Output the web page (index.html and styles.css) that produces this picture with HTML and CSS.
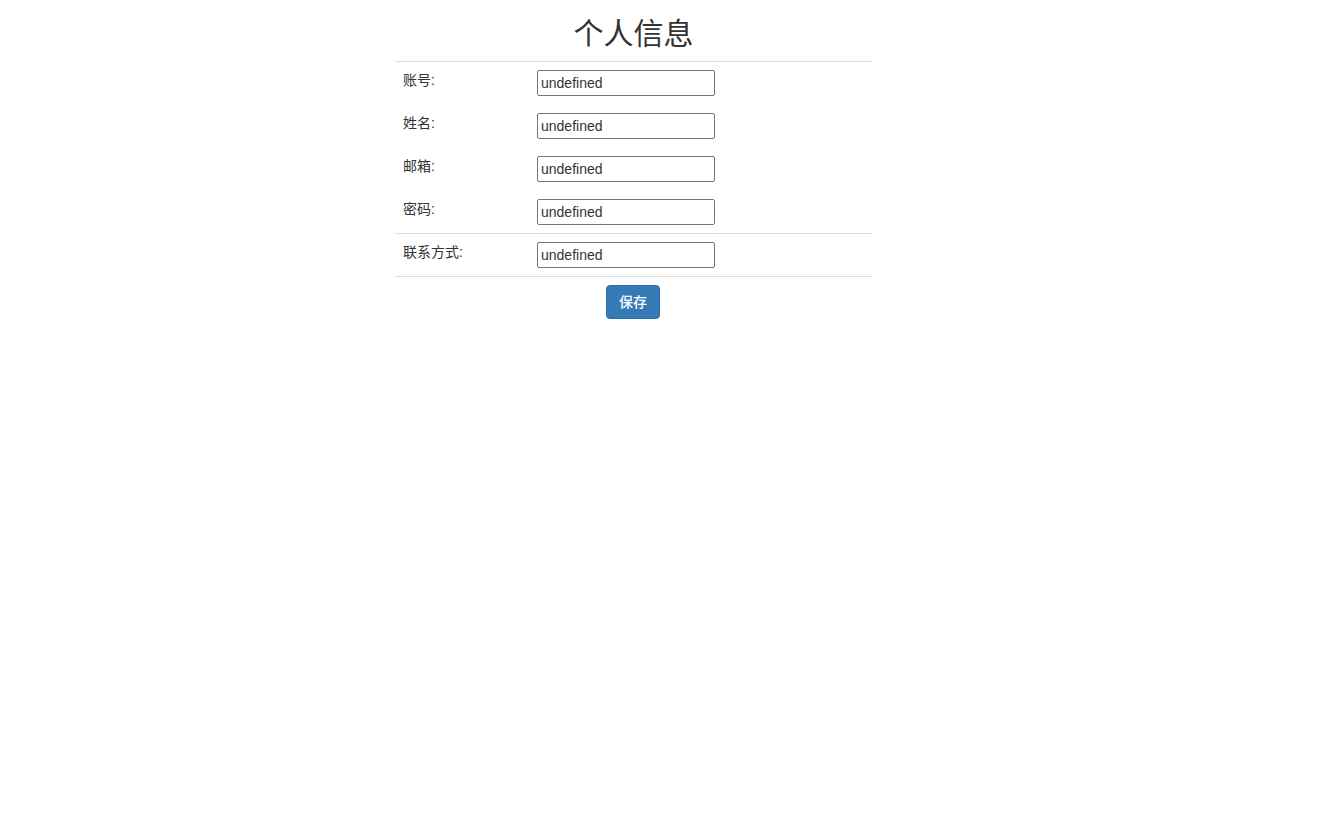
FILE: index.html
```html
<!DOCTYPE html>
<html lang="zh-CN">
<head>
<meta charset="utf-8">
<title>个人信息</title>
<link rel="stylesheet" href="styles.css">
</head>
<body>
<div class="panel">
  <h2 class="title">个人信息</h2>
  <table class="info">
    <tbody>
      <tr class="first"><td class="label">账号:</td><td><input class="field" type="text" value="undefined"></td></tr>
      <tr><td class="label">姓名:</td><td><input class="field" type="text" value="undefined"></td></tr>
      <tr><td class="label">邮箱:</td><td><input class="field" type="text" value="undefined"></td></tr>
      <tr><td class="label">密码:</td><td><input class="field" type="text" value="undefined"></td></tr>
      <tr class="bordered"><td class="label">联系方式:</td><td><input class="field" type="text" value="undefined"></td></tr>
    </tbody>
  </table>
  <div class="actions"><button class="btn" type="button">保存</button></div>
</div>
</body>
</html>
```
FILE: styles.css
```css
html, body {
  margin: 0;
  padding: 0;
  background: #fff;
}
body {
  font-family: "Liberation Sans", Arial, "Noto Sans CJK SC", sans-serif;
  font-size: 14px;
  line-height: 20px;
  color: #333;
}
.panel {
  width: 477px;
  margin-left: 395px;
}
.title {
  margin: 0;
  height: 61px;
  box-sizing: border-box;
  padding-top: 17px;
  font-size: 30px;
  line-height: 33px;
  font-weight: 400;
  text-align: center;
  color: #333;
}
.info {
  width: 100%;
  border-collapse: separate;
  border-spacing: 0;
  border-bottom: 1px solid #ddd;
}
.info td {
  padding: 8px;
  vertical-align: top;
  line-height: 20px;
  border-top: 1px solid transparent;
}
.info .label {
  width: 118px;
  font-size: 14px;
}
.info tr.first td,
.info tr.bordered td {
  border-top-color: #ddd;
}
.field {
  display: block;
  box-sizing: border-box;
  width: 178px;
  height: 26px;
  margin: 0;
  padding: 1px 3px;
  border: 1px solid #767676;
  border-radius: 2px;
  font-family: "Liberation Sans", Arial, sans-serif;
  font-size: 14px;
  color: #333;
  background: #fff;
}
.actions {
  display: flex;
  justify-content: center;
  padding-top: 8px;
  padding-right: 1px;
}
.btn {
  box-sizing: border-box;
  width: 54px;
  height: 34px;
  padding: 6px 0;
  border: 1px solid #2e6da4;
  border-radius: 4px;
  background: #337ab7;
  color: #fff;
  font-family: "Liberation Sans", Arial, "Noto Sans CJK SC", sans-serif;
  font-size: 14px;
  font-weight: 500;
  line-height: 20px;
  cursor: pointer;
}
```
